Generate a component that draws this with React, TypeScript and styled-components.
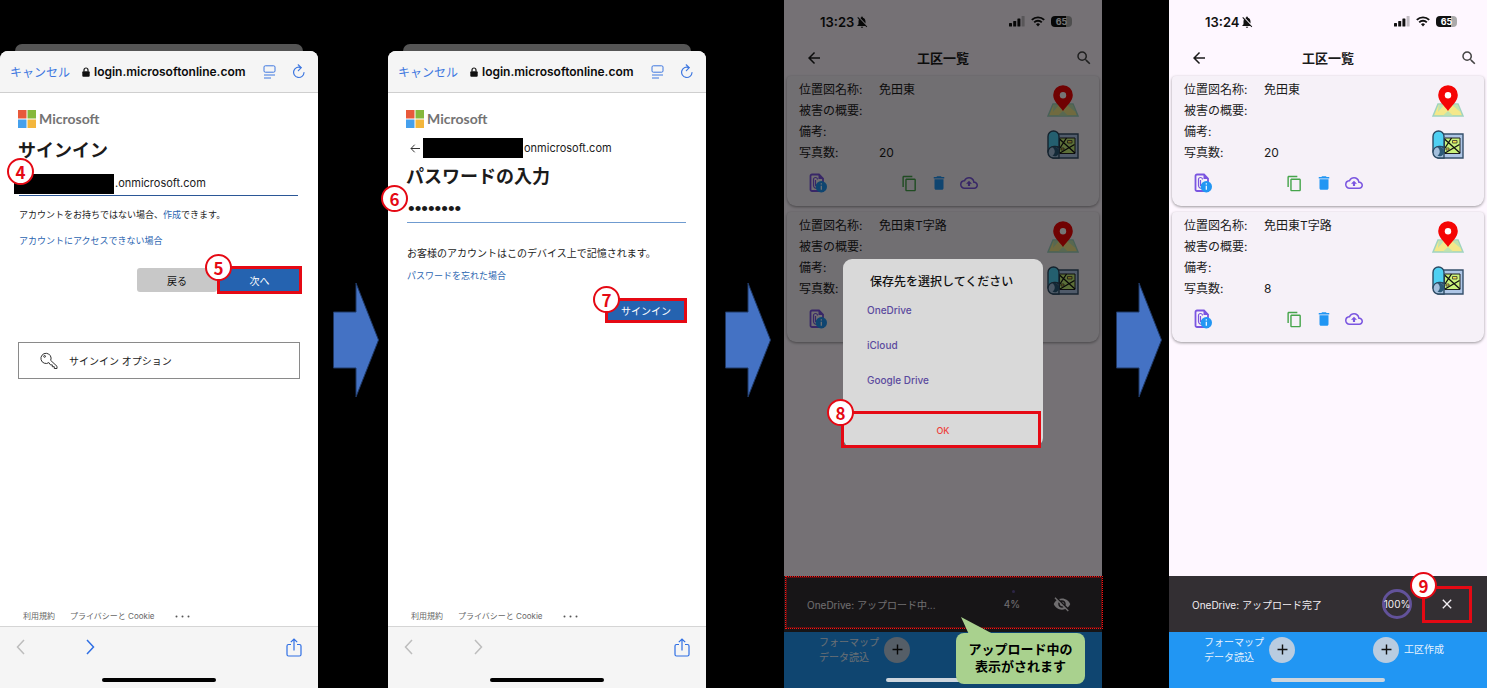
import React from "react";
import styled, { createGlobalStyle, css } from "styled-components";
import {
  MdAdd,
  MdArrowBack,
  MdClose,
  MdContentCopy,
  MdDelete,
  MdNotificationsOff,
  MdOutlineBackup,
  MdSearch,
  MdVisibilityOff,
} from "react-icons/md";

const RED = "#e50914";

const GlobalStyle = createGlobalStyle`
  *, *::before, *::after { box-sizing: border-box; }
  body {
    margin: 0;
    background: #000;
    font-family: Inter, "Noto Sans CJK JP", sans-serif;
    color: #1b1b1b;
  }
  button, input { font: inherit; color: inherit; }
  button { padding: 0; border: 0; background: none; white-space: nowrap; }
  a { text-decoration: none; }
  svg { display: block; flex: none; }
  h1, h2, p, dl, dd { margin: 0; }
`;

/* ---------- page ---------- */

const Page = styled.main`
  display: grid;
  grid-template-columns:
    minmax(0, 318fr) minmax(0, 70fr) minmax(0, 318fr) minmax(0, 78fr)
    minmax(0, 318fr) minmax(0, 67fr) minmax(0, 318fr);
  min-height: 100vh;
`;

const ArrowCell = styled.div`
  display: flex;
  align-items: center;
  justify-content: center;
  padding: 0 0 8px 6px;
`;

function StepArrow() {
  return (
    <ArrowCell>
      <svg width="46" height="118" viewBox="0 0 46 118" aria-hidden="true">
        <path
          d="M.5 31H23V2L45.5 59 23 116V87H.5Z"
          fill="#4472c4"
          stroke="#1f3864"
        />
      </svg>
    </ArrowCell>
  );
}

const Badge = styled.span<{ $x?: number; $y?: number }>`
  position: absolute;
  z-index: 5;
  left: ${(p) => p.$x ?? -14}px;
  top: ${(p) => p.$y ?? -14}px;
  width: 27px;
  height: 27px;
  border: 2px solid ${RED};
  border-radius: 50%;
  background: #fff;
  color: ${RED};
  font: 700 17px/23px "Noto Sans CJK JP", sans-serif;
  text-align: center;
`;

const Highlighted = styled.div`
  position: relative;
  display: flex;
`;

const Frame = styled.span`
  position: absolute;
  z-index: 4;
  inset: -2px;
  border: 3px solid ${RED};
  pointer-events: none;
`;

/* ---------- browser sheet ---------- */

const Phone = styled.section`
  position: relative;
  display: flex;
  flex-direction: column;
  min-height: 100vh;
`;

const SheetBehind = styled.div`
  height: 7px;
  margin: 44px 15px 0;
  border-radius: 7px 7px 0 0;
  background: #555;
`;

const Sheet = styled.div`
  flex: 1;
  display: flex;
  flex-direction: column;
  border-radius: 8px 8px 0 0;
  background: #fff;
`;

const AddressBar = styled.header`
  display: flex;
  align-items: center;
  height: 42px;
  padding: 0 13px 0 10px;
  border-bottom: 1px solid #cfcfcf;
  border-radius: 8px 8px 0 0;
  background: #f5f5f5;
  color: #3f78e0;
`;

const CancelButton = styled.button`
  font-size: 12px;
`;

const Url = styled.span`
  display: flex;
  align-items: center;
  gap: 4px;
  margin-left: 12px;
  color: #0b0b0b;
  font-size: 12px;
  font-weight: 600;
`;

const BarIcons = styled.span`
  display: flex;
  align-items: center;
  gap: 17px;
  margin-left: auto;
`;

const SheetBody = styled.form`
  flex: 1;
  display: flex;
  flex-direction: column;
  padding: 17px 18px 3px;
`;

const Brand = styled.div`
  display: flex;
  align-items: center;
  gap: 3px;
  height: 18px;
  color: #737373;
  font: 700 14px/18px Lato, "Open Sans", sans-serif;
`;

const Heading = styled.h1<{ $gap: number }>`
  margin-top: ${(p) => p.$gap}px;
  font-size: 18px;
  line-height: 24px;
  font-weight: 600;
`;

const Redaction = styled.span`
  flex: none;
  width: 100px;
  height: 20px;
  background: #000;
`;

const AccountField = styled.label`
  position: relative;
  display: flex;
  height: 22px;
  margin: 11px 2px 0 1px;
  border-bottom: 1px solid #2b5797;
  ${Redaction} {
    margin-left: -5px;
  }
`;

const TextInput = styled.input`
  flex: 1;
  min-width: 0;
  height: 18px;
  padding: 0 1px;
  border: 0;
  outline: 0;
  background: none;
  font-size: 11px;
`;

const AccountRow = styled.div`
  display: flex;
  align-items: center;
  height: 20px;
  margin-top: 10px;
  padding-left: 4px;
  font-size: 11px;
  ${Redaction} {
    margin: 0 1px 0 3px;
  }
`;

const PasswordField = styled.label`
  position: relative;
  display: flex;
  height: 25px;
  margin: 9px 2px 0 1px;
  border-bottom: 1px solid #6f9bd0;
`;

const PasswordInput = styled(TextInput)`
  height: 22px;
  font-family: "Liberation Sans", sans-serif;
  font-size: 19px;
`;

const Note = styled.p<{ $gap: number; $size: number }>`
  margin-top: ${(p) => p.$gap}px;
  padding-left: 1px;
  font-size: ${(p) => p.$size}px;
  line-height: 14px;
  white-space: nowrap;
`;

const TextLink = styled.a`
  color: #2a64b0;
`;

const ButtonRow = styled.div<{ $gap: number; $inset?: number }>`
  display: flex;
  justify-content: flex-end;
  gap: 2px;
  margin-top: ${(p) => p.$gap}px;
  padding-right: ${(p) => p.$inset ?? 0}px;
`;

const FormButton = styled.button<{ $primary?: boolean; $w: number; $h: number }>`
  width: ${(p) => p.$w}px;
  height: ${(p) => p.$h}px;
  border-radius: 3px;
  background: ${(p) => (p.$primary ? "#2563b0" : "#c8c8c8")};
  color: ${(p) => (p.$primary ? "#fff" : "#111")};
  font-size: 10px;
`;

const OptionsButton = styled.button`
  display: flex;
  align-items: center;
  gap: 11px;
  height: 37px;
  margin-top: 50px;
  padding-left: 21px;
  border: 1px solid #8a8a8a;
  font-size: 10px;
`;

const FooterLinks = styled.nav`
  display: flex;
  align-items: center;
  gap: 15px;
  margin-top: auto;
  padding-left: 5px;
  font-size: 8px;
  line-height: 14px;
  a {
    color: #666;
    white-space: nowrap;
  }
  a:last-child {
    padding-left: 5px;
  }
`;

const Toolbar = styled.footer`
  padding-bottom: 6px;
  border-top: 1px solid #d5d5d5;
  background: #f5f5f5;
`;

const ToolbarRow = styled.div`
  display: flex;
  align-items: center;
  height: 40px;
  padding: 0 16px;
  button:nth-child(2) {
    margin-left: 59px;
  }
  button:last-child {
    margin-left: auto;
  }
`;

const HomeIndicator = styled.div<{ $color: string }>`
  position: relative;
  z-index: 3;
  width: 114px;
  height: 4px;
  margin: 11px auto 0;
  border-radius: 2px;
  background: ${(p) => p.$color};
`;

const LockIcon = () => (
  <svg width="8" height="10" viewBox="0 0 8 10" aria-hidden="true">
    <path d="M2 4.500V3a2 2 0 0 1 4 0v1.500" fill="none" stroke="#111" strokeWidth="1.200" />
    <rect x=".3" y="4.300" width="7.400" height="5.500" rx="1" fill="#111" />
  </svg>
);

const ReaderIcon = () => (
  <svg width="13" height="14" viewBox="0 0 13 14" fill="none" stroke="currentColor" aria-hidden="true">
    <rect x="1" y=".8" width="11" height="6.400" rx="1.300" />
    <path d="M1 10h11M1 13h7" />
  </svg>
);

const ReloadIcon = () => (
  <svg width="12" height="15" viewBox="0 0 12 15" fill="none" stroke="currentColor" strokeWidth="1.200" strokeLinecap="round" aria-hidden="true">
    <path d="M8 3.600A5.200 5.200 0 1 0 11 8.500" />
    <path d="M5.200.8 8.200 3.700 5.400 6.700" strokeLinejoin="round" />
  </svg>
);

const MicrosoftLogo = () => (
  <svg width="18" height="18" viewBox="0 0 18 18" aria-hidden="true">
    <path d="M0 0h8.500v8.500H0z" fill="#e8593a" />
    <path d="M9.500 0H18v8.500H9.500z" fill="#86b83b" />
    <path d="M0 9.500h8.500V18H0z" fill="#45a0ec" />
    <path d="M9.500 9.500H18V18H9.500z" fill="#f3b63c" />
  </svg>
);

const KeyIcon = () => (
  <svg width="18" height="18" viewBox="0 0 18 18" fill="none" stroke="#333" aria-hidden="true">
    <path d="M8.900 10.600A5.100 5.100 0 1 1 10.700 8.400L17 14.300V16.500H14.300V14.700H12.300V12.900H10.500Z" strokeLinejoin="round" />
    <circle cx="4.600" cy="4.400" r=".9" />
  </svg>
);

const Chevron = ({ back = false }: { back?: boolean }) => (
  <svg width="9" height="16" viewBox="0 0 9 16" fill="none" stroke="currentColor" strokeWidth="1.500" aria-hidden="true">
    <path d={back ? "M8 1 1.500 8 8 15" : "M1 1 7.500 8 1 15"} />
  </svg>
);

const ShareIcon = () => (
  <svg width="16" height="19" viewBox="0 0 16 19" fill="none" stroke="currentColor" strokeWidth="1.200" aria-hidden="true">
    <path d="M5 6.500H2.500a1.500 1.500 0 0 0-1.500 1.500v8.500A1.500 1.500 0 0 0 2.500 18h11a1.500 1.500 0 0 0 1.500-1.500V8a1.500 1.500 0 0 0-1.500-1.500H11" />
    <path d="M8 12.500V1.200M4.800 4.200 8 1l3.200 3.200" />
  </svg>
);

const BackArrowIcon = () => (
  <svg width="10" height="9" viewBox="0 0 10 9" fill="none" stroke="#333" aria-hidden="true">
    <path d="M10 4.500H1M4.700.7 1 4.500l3.700 3.800" />
  </svg>
);

const MoreDots = () => (
  <svg width="15" height="3" viewBox="0 0 15 3" fill="#555" aria-hidden="true">
    <circle cx="1.500" cy="1.500" r="1" />
    <circle cx="7.500" cy="1.500" r="1" />
    <circle cx="13.500" cy="1.500" r="1" />
  </svg>
);

const NavButton = styled.button<{ $active?: boolean }>`
  width: 11px;
  color: ${(p) => (p.$active ? "#2f6fe4" : "#bdbdbd")};
`;

const ShareButton = styled.button`
  color: #2f6fe4;
`;

function BrowserSheet({
  canGoForward,
  children,
}: {
  canGoForward?: boolean;
  children: React.ReactNode;
}) {
  return (
    <Phone>
      <SheetBehind />
      <Sheet>
        <AddressBar>
          <CancelButton type="button">キャンセル</CancelButton>
          <Url>
            <LockIcon />
            login.microsoftonline.com
          </Url>
          <BarIcons>
            <button type="button" aria-label="リーダー表示"><ReaderIcon /></button>
            <button type="button" aria-label="再読み込み"><ReloadIcon /></button>
          </BarIcons>
        </AddressBar>
        <SheetBody onSubmit={(e) => e.preventDefault()}>
          <Brand>
            <MicrosoftLogo />
            Microsoft
          </Brand>
          {children}
          <FooterLinks>
            <a href="#terms">利用規約</a>
            <a href="#privacy">プライバシーと Cookie</a>
            <a href="#more" aria-label="その他"><MoreDots /></a>
          </FooterLinks>
        </SheetBody>
        <Toolbar>
          <ToolbarRow>
            <NavButton type="button" aria-label="戻る"><Chevron back /></NavButton>
            <NavButton type="button" $active={canGoForward} aria-label="進む"><Chevron /></NavButton>
            <ShareButton type="button" aria-label="共有"><ShareIcon /></ShareButton>
          </ToolbarRow>
          <HomeIndicator $color="#000" />
        </Toolbar>
      </Sheet>
    </Phone>
  );
}

/* ---------- work area list app ---------- */

const AppPhone = styled(Phone)`
  background: #fef7ff;
`;

const StatusBar = styled.div`
  display: flex;
  align-items: center;
  gap: 1px;
  height: 43px;
  padding: 0 30px 0 36px;
  font-size: 13px;
  font-weight: 600;
  color: #111;
`;

const StatusIcons = styled.span`
  display: flex;
  align-items: center;
  gap: 6px;
  margin-left: auto;
`;

const AppBar = styled.header`
  display: grid;
  grid-template-columns: 1fr auto 1fr;
  align-items: center;
  height: 30px;
  padding: 0 9px 1px;
`;

const BackButton = styled.button`
  justify-self: start;
  margin-left: 12px;
`;

const SearchButton = styled.button`
  justify-self: end;
  color: #444;
`;

const AppTitle = styled.h1`
  font-size: 13px;
  line-height: 20px;
  font-weight: 600;
`;

const CardList = styled.div`
  flex: 1;
  display: flex;
  flex-direction: column;
  gap: 6px;
  padding: 3px 3px 0;
`;

const Card = styled.article`
  display: flex;
  justify-content: space-between;
  padding: 3px 20px 11px 12px;
  border-radius: 4px 4px 9px 9px;
  background: #f6f1f8;
  box-shadow: 0 1px 3px rgba(0, 0, 0, 0.4);
`;

const Details = styled.dl`
  display: grid;
  grid-template-columns: 80px auto;
  grid-auto-rows: 21px;
  align-items: center;
  justify-content: start;
  font-size: 12px;
  line-height: 20px;
  white-space: nowrap;
`;

const CardActions = styled.div`
  display: flex;
  align-items: center;
  gap: 2px;
  height: 24px;
  margin-top: 8px;
  padding-left: 5px;
`;

const IconButton = styled.button<{ $color?: string }>`
  display: flex;
  align-items: center;
  justify-content: center;
  width: 28px;
  height: 24px;
  color: ${(p) => p.$color ?? "inherit"};
`;

const ActionGap = styled.span`
  width: 59px;
`;

const MapButtons = styled.div`
  display: flex;
  flex-direction: column;
  gap: 13px;
  padding-top: 6px;
`;

const SignalIcon = () => (
  <svg width="16" height="11" viewBox="0 0 16 11" aria-hidden="true">
    <rect x="0" y="7" width="3" height="3.500" rx=".6" fill="#111" />
    <rect x="4.200" y="5" width="3" height="5.500" rx=".6" fill="#111" />
    <rect x="8.400" y="2.500" width="3" height="8" rx=".6" fill="#111" />
    <rect x="12.600" y="0" width="3" height="10.500" rx=".6" fill="#111" opacity=".25" />
  </svg>
);

const WifiIcon = () => (
  <svg width="14" height="11" viewBox="0 0 14 11" fill="none" stroke="#111" strokeWidth="1.900" aria-hidden="true">
    <path d="M.8 3.900a8.800 8.800 0 0 1 12.400 0" />
    <path d="M3.200 6.300a5.400 5.400 0 0 1 7.600 0" />
    <path d="M7 10.500 5 8.300a2.900 2.900 0 0 1 4 0Z" fill="#111" stroke="none" />
  </svg>
);

const Battery = styled.span`
  width: 21px;
  height: 11px;
  border-radius: 4px;
  background: linear-gradient(90deg, #111 70%, #aaa 70%);
  color: #fff;
  font-size: 9px;
  line-height: 11px;
  font-weight: 700;
  text-align: center;
`;

const FileInfoIcon = () => (
  <svg width="18" height="20" viewBox="0 0 18 20" aria-hidden="true">
    <path d="M3 1.500H10L14 5.500V18H3A1.500 1.500 0 0 1 1.500 16.500V3A1.500 1.500 0 0 1 3 1.500Z" fill="none" stroke="#7a55e0" strokeWidth="1.800" />
    <path d="M9.500 1v5h5Z" fill="#7a55e0" />
    <path d="M8.500 6.500a2 2 0 0 0-4 0v6.300a2.600 2.600 0 0 0 4 2M6.500 7v6" fill="none" stroke="#7a55e0" strokeWidth="1.200" />
    <circle cx="12.300" cy="13.700" r="5.700" fill="#2196f3" />
    <path d="M12.300 12.700v4M12.300 10.300v1.300" stroke="#fff" strokeWidth="1.200" />
  </svg>
);

const PinMapIcon = () => (
  <svg width="32" height="32" viewBox="0 0 32 32" aria-hidden="true">
    <path d="M6 19H26L31 31H1Z" fill="#f4e88a" stroke="#9fd3c0" strokeWidth="1.500" />
    <path d="M6.500 20 12 20 6 27ZM20 20h5.500l3.500 7.500Z" fill="#bfe3b0" />
    <path d="M11 30.500 16 26l5 4.500Z" fill="#bfe3b0" />
    <path d="M16 26C12.500 20.800 6.200 16.500 6.200 10a9.800 9.800 0 0 1 19.600 0C25.800 16.500 19.500 20.800 16 26Z" fill="#f50505" />
    <circle cx="16" cy="10.300" r="3.200" fill="#fff" />
  </svg>
);

const MapRollIcon = () => (
  <svg width="32" height="29" viewBox="0 0 32 29" aria-hidden="true">
    <path d="M11 4H31V28H6V4Z" fill="#aec6e6" stroke="#36506b" strokeWidth="1.400" />
    <path d="M12.500 8H28V23.500H12.500Z" fill="#c9f27b" stroke="#222" />
    <path d="M12.500 9 28 23M13 23 27.500 14.500M19.500 8 13 18" fill="none" stroke="#111" strokeWidth="1.300" />
    <path d="M20.500 10.500h4.500v2.500h-4.500ZM14 18h3v2h-3Z" fill="#f5e04a" stroke="#333" strokeWidth=".8" />
    <path d="M1 22.500V6.500a5.500 5.500 0 0 1 11 0V17.500C8 15.500 3 16.500 1 22.500Z" fill="#4fd0f2" stroke="#2b4a63" strokeWidth="1.400" />
    <path d="M1 22.500c0-4 3-6 6-6 2.500 0 4 .6 5 1.500V28H6.500A5.500 5.500 0 0 1 1 22.500Z" fill="#a3bfdc" stroke="#2b4a63" strokeWidth="1.400" />
    <path d="M5.500 17.500C9 16 12.300 18.500 12.300 22A4.500 4.500 0 0 1 5.500 25.500C8.500 23.500 8.500 19.500 5.500 17.500Z" fill="#2b5a78" />
  </svg>
);

interface Area {
  name: string;
  photos: number;
}

const areas: Area[] = [
  { name: "免田東", photos: 20 },
  { name: "免田東T字路", photos: 8 },
];

function AreaCard({ area }: { area: Area }) {
  return (
    <Card>
      <div>
        <Details>
          <dt>位置図名称:</dt>
          <dd>{area.name}</dd>
          <dt>被害の概要:</dt>
          <dd />
          <dt>備考:</dt>
          <dd />
          <dt>写真数:</dt>
          <dd>{area.photos}</dd>
        </Details>
        <CardActions>
          <IconButton type="button" aria-label="ファイル情報"><FileInfoIcon /></IconButton>
          <ActionGap />
          <IconButton type="button" $color="#46a54b" aria-label="複製"><MdContentCopy size={17} /></IconButton>
          <IconButton type="button" $color="#2196f3" aria-label="削除"><MdDelete size={18} /></IconButton>
          <IconButton type="button" $color="#7a55e0" aria-label="アップロード"><MdOutlineBackup size={18} /></IconButton>
        </CardActions>
      </div>
      <MapButtons>
        <button type="button" aria-label="地図"><PinMapIcon /></button>
        <button type="button" aria-label="図面"><MapRollIcon /></button>
      </MapButtons>
    </Card>
  );
}

const UploadBar = styled.div`
  position: relative;
  display: flex;
  align-items: center;
  height: 56px;
  padding: 0 17px 0 23px;
  background: #332f33;
  color: #f2eef2;
  font-size: 10px;
  white-space: nowrap;
`;

const Progress = styled.span<{ $done: boolean }>`
  position: relative;
  display: flex;
  align-items: center;
  justify-content: center;
  width: 30px;
  height: 30px;
  margin: 0 12px 0 auto;
  border-radius: 50%;
  ${(p) =>
    p.$done
      ? css`
          border: 3px solid #62529a;
        `
      : css`
          &::before {
            content: "";
            position: absolute;
            top: 1px;
            left: 15px;
            width: 3px;
            height: 3px;
            border-radius: 50%;
            background: #62529a;
          }
        `}
`;

const DismissButton = styled.button`
  display: flex;
  align-items: center;
  justify-content: center;
  width: 46px;
  height: 33px;
`;

const DottedFrame = styled.span`
  position: absolute;
  z-index: 4;
  inset: 0 -1px 3px 1px;
  border: 1px dotted #ff1010;
  box-shadow: inset 0 0 0 1px rgba(255, 0, 0, 0.3);
`;

const BottomBar = styled.footer`
  padding-bottom: 6px;
  background: #2196f3;
`;

const BottomActions = styled.div`
  display: flex;
  align-items: center;
  justify-content: space-between;
  height: 35px;
  padding: 0 43px 0 35px;
`;

const CreateButton = styled.button`
  display: flex;
  align-items: center;
  gap: 5px;
  color: #e6f2fd;
  font-size: 10px;
  line-height: 15px;
  text-align: left;
`;

const PlusDisc = styled.span`
  display: flex;
  align-items: center;
  justify-content: center;
  width: 26px;
  height: 26px;
  border-radius: 50%;
  background: #b9cce0;
  color: #111;
`;

function AreaListPhone({
  time,
  message,
  percent,
  children,
}: {
  time: string;
  message: string;
  percent: number;
  children?: React.ReactNode;
}) {
  const done = percent === 100;
  return (
    <AppPhone>
      <StatusBar>
        {time}
        <MdNotificationsOff size={14} />
        <StatusIcons>
          <SignalIcon />
          <WifiIcon />
          <Battery>65</Battery>
        </StatusIcons>
      </StatusBar>
      <AppBar>
        <BackButton type="button" aria-label="戻る"><MdArrowBack size={18} /></BackButton>
        <AppTitle>工区一覧</AppTitle>
        <SearchButton type="button" aria-label="検索"><MdSearch size={18} /></SearchButton>
      </AppBar>
      <CardList>
        {areas.map((area) => (
          <AreaCard key={area.name} area={area} />
        ))}
      </CardList>
      <UploadBar>
        OneDrive: {message}
        <Progress $done={done}>{percent}%</Progress>
        {done ? (
          <Highlighted>
            <DismissButton type="button" aria-label="閉じる"><MdClose size={16} /></DismissButton>
            <Frame />
            <Badge $y={-16}>9</Badge>
          </Highlighted>
        ) : (
          <>
            <DismissButton type="button" aria-label="非表示"><MdVisibilityOff size={18} /></DismissButton>
            <DottedFrame />
          </>
        )}
      </UploadBar>
      <BottomBar>
        <BottomActions>
          <CreateButton type="button">
            <span>フォーマップ<br />データ読込</span>
            <PlusDisc><MdAdd size={17} /></PlusDisc>
          </CreateButton>
          {done && (
            <CreateButton type="button">
              <PlusDisc><MdAdd size={17} /></PlusDisc>
              <span>工区作成</span>
            </CreateButton>
          )}
        </BottomActions>
        <HomeIndicator $color="#cdd5dd" />
      </BottomBar>
      {children}
    </AppPhone>
  );
}

/* ---------- save destination dialog ---------- */

const Scrim = styled.div`
  position: absolute;
  z-index: 2;
  inset: 0;
  display: flex;
  align-items: center;
  justify-content: center;
  padding-top: 18px;
  background: rgba(0, 0, 0, 0.54);
`;

const Dialog = styled.div`
  display: flex;
  flex-direction: column;
  width: 200px;
  padding-top: 12px;
  border-radius: 9px;
  background: #d9d9d9;
`;

const DialogTitle = styled.h2`
  padding-left: 27px;
  font-size: 12px;
  line-height: 21px;
  font-weight: 500;
  color: #111;
`;

const Choice = styled.button`
  height: 35px;
  padding-left: 24px;
  color: #5b4a9e;
  font-size: 10px;
  font-weight: 500;
  text-align: left;
`;

const OkArea = styled(Highlighted)`
  margin-top: 16px;
`;

const OkFrame = styled(Frame)`
  inset: -2px 2px -1px -2px;
`;

const OkButton = styled.button`
  flex: 1;
  height: 34px;
  color: #ee3f3a;
  font-size: 9px;
  font-weight: 500;
`;

const Callout = styled.p`
  position: absolute;
  z-index: 5;
  right: 17px;
  bottom: 4px;
  width: 129px;
  padding: 8px 0 9px;
  border-radius: 8px;
  background: #a9d18e;
  color: #000;
  font-size: 13px;
  line-height: 17px;
  font-weight: 700;
  text-align: center;
  svg {
    position: absolute;
    left: 4px;
    top: -17px;
  }
`;

export default function App() {
  return (
    <>
      <GlobalStyle />
      <Page>
        <BrowserSheet canGoForward>
          <Heading $gap={11}>サインイン</Heading>
          <AccountField>
            <Redaction />
            <TextInput aria-label="アカウント" defaultValue=".onmicrosoft.com" />
            <Badge $x={-12} $y={-16}>4</Badge>
          </AccountField>
          <Note $gap={12} $size={9}>
            アカウントをお持ちではない場合、<TextLink href="#create">作成</TextLink>できます。
          </Note>
          <Note $gap={12} $size={9}>
            <TextLink href="#recover">アカウントにアクセスできない場合</TextLink>
          </Note>
          <ButtonRow $gap={20}>
            <FormButton type="button" $w={80} $h={24}>戻る</FormButton>
            <Highlighted>
              <FormButton type="submit" $primary $w={81} $h={24}>次へ</FormButton>
              <Frame />
              <Badge>5</Badge>
            </Highlighted>
          </ButtonRow>
          <OptionsButton type="button">
            <KeyIcon />
            サインイン オプション
          </OptionsButton>
        </BrowserSheet>
        <StepArrow />
        <BrowserSheet>
          <AccountRow>
            <button type="button" aria-label="戻る"><BackArrowIcon /></button>
            <Redaction />
            onmicrosoft.com
          </AccountRow>
          <Heading $gap={7}>パスワードの入力</Heading>
          <PasswordField>
            <PasswordInput type="password" aria-label="パスワード" defaultValue="password" />
            <Badge $x={-26} $y={-13}>6</Badge>
          </PasswordField>
          <Note $gap={23} $size={10}>お客様のアカウントはこのデバイス上で記憶されます。</Note>
          <Note $gap={9} $size={9}>
            <TextLink href="#forgot">パスワードを忘れた場合</TextLink>
          </Note>
          <ButtonRow $gap={17} $inset={3}>
            <Highlighted>
              <FormButton type="submit" $primary $w={78} $h={21}>サインイン</FormButton>
              <Frame />
              <Badge>7</Badge>
            </Highlighted>
          </ButtonRow>
        </BrowserSheet>
        <StepArrow />
        <AreaListPhone time="13:23" message="アップロード中..." percent={4}>
          <Scrim>
            <Dialog role="dialog" aria-labelledby="save-title">
              <DialogTitle id="save-title">保存先を選択してください</DialogTitle>
              <Choice type="button">OneDrive</Choice>
              <Choice type="button">iCloud</Choice>
              <Choice type="button">Google Drive</Choice>
              <OkArea>
                <OkButton type="button">OK</OkButton>
                <OkFrame />
                <Badge $x={-16} $y={-14}>8</Badge>
              </OkArea>
            </Dialog>
          </Scrim>
          <Callout>
            <svg width="36" height="19" viewBox="0 0 36 19" aria-hidden="true">
              <path d="M1 1 34 18.500H9Z" fill="#a9d18e" />
            </svg>
            アップロード中の
            <br />
            表示がされます
          </Callout>
        </AreaListPhone>
        <StepArrow />
        <AreaListPhone time="13:24" message="アップロード完了" percent={100} />
      </Page>
    </>
  );
}
